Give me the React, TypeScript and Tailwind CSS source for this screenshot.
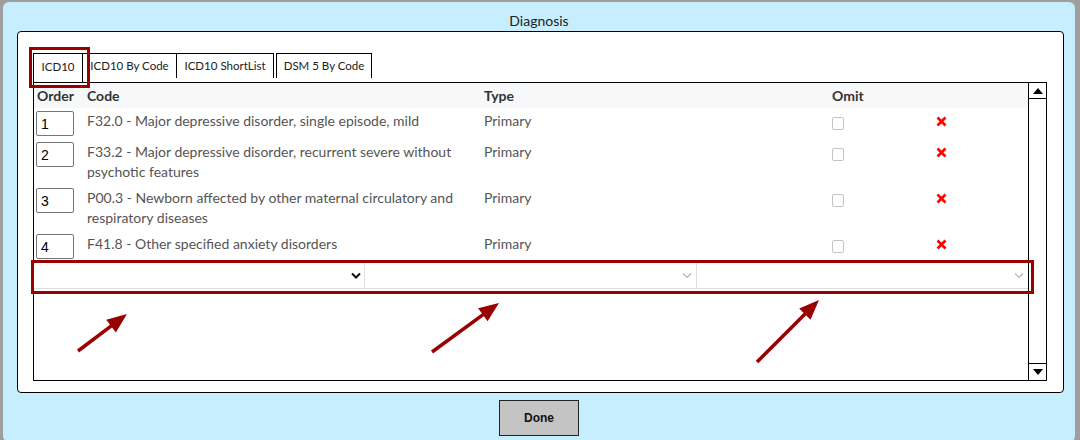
import React from 'react';

const rows = [
  { order: '1', code: 'F32.0 - Major depressive disorder, single episode, mild', type: 'Primary' },
  { order: '2', code: 'F33.2 - Major depressive disorder, recurrent severe without psychotic features', type: 'Primary' },
  { order: '3', code: 'P00.3 - Newborn affected by other maternal circulatory and respiratory diseases', type: 'Primary' },
  { order: '4', code: 'F41.8 - Other specified anxiety disorders', type: 'Primary' },
];

const tabs = ['ICD10', 'ICD10 By Code', 'ICD10 ShortList', 'DSM 5 By Code'];

function Arrow({ x1, y1, x2, y2 }: { x1: number; y1: number; x2: number; y2: number }) {
  const dx = x2 - x1;
  const dy = y2 - y1;
  const len = Math.sqrt(dx * dx + dy * dy);
  const ux = dx / len;
  const uy = dy / len;
  const headLen = 20;
  const half = 8;
  const bx = x2 - ux * headLen;
  const by = y2 - uy * headLen;
  const pts = `${x2},${y2} ${bx - uy * half},${by + ux * half} ${bx + uy * half},${by - ux * half}`;
  return (
    <g>
      <line x1={x1} y1={y1} x2={bx + ux * 2} y2={by + uy * 2} stroke="#990000" strokeWidth="3.5" />
      <polygon points={pts} fill="#990000" />
    </g>
  );
}

function Chevron({ dark }: { dark?: boolean }) {
  return (
    <svg width="10" height="7" viewBox="0 0 10 7">
      <path
        d="M1 1.5 L5 5.5 L9 1.5"
        fill="none"
        stroke={dark ? '#111' : '#b5b5b5'}
        strokeWidth={dark ? 2 : 1.2}
      />
    </svg>
  );
}

function RedX() {
  return (
    <svg width="11" height="11" viewBox="0 0 11 11">
      <path d="M1.5 1.5 L9.5 9.5 M9.5 1.5 L1.5 9.5" stroke="#ff0000" strokeWidth="2.6" />
    </svg>
  );
}

export default function App() {
  return (
    <div className="relative w-[1080px] h-[440px] overflow-hidden bg-[#9e9e9c] font-['Lato','Liberation_Sans',sans-serif]">
      <div className="ml-[3px] mt-[2px] w-[1072px] h-[440px] rounded-[6px] bg-[#c6eefe] flex flex-col">
        <div className="h-[29px] pt-[9px] text-center text-[14px] leading-[20px] text-[#222]">Diagnosis</div>

        <div className="ml-[14px] w-[1047px] h-[362px] border border-black rounded-[4px] bg-white pl-[15px] pt-[20px]">
          {/* tabs */}
          <div className="flex items-end h-[30px]">
            <div className="w-[50px] h-[29px] border-t border-l border-r border-black flex items-center justify-center text-[11.5px] text-[#222] pb-[2px]">
              {tabs[0]}
            </div>
            <div className="w-[94px] h-[25px] mb-[4px] border-t border-r border-black flex items-center justify-center text-[11.5px] text-[#222]">
              {tabs[1]}
            </div>
            <div className="w-[97px] h-[25px] mb-[4px] border-t border-r border-black flex items-center justify-center text-[11.5px] text-[#222]">
              {tabs[2]}
            </div>
            <div className="ml-[2px] w-[96px] h-[25px] mb-[4px] border-t border-l border-r border-black flex items-center justify-center text-[11.5px] text-[#222]">
              {tabs[3]}
            </div>
          </div>

          {/* table */}
          <div className="w-[1014px] h-[299px] border border-black flex">
            <div className="flex-1 flex flex-col">
              <div className="h-[25px] bg-[#f7f8fa] grid grid-cols-[50px_397px_348px_104px_1fr] items-center text-[14px] font-bold text-[#333]">
                <div className="pl-[3px]">Order</div>
                <div className="pl-[3px]">Code</div>
                <div className="pl-[3px]">Type</div>
                <div className="pl-[3px]">Omit</div>
                <div />
              </div>

              {rows.map((r) => (
                <div
                  key={r.order}
                  className="grid grid-cols-[50px_397px_348px_104px_1fr] pb-[3px] text-[14px] leading-[20px] text-[#555]"
                >
                  <div className="pt-[3px] pl-[2px]">
                    <div className="w-[38px] h-[25px] border border-[#767676] rounded-[2px] pl-[4px] pt-[2px] text-[14px] text-black font-['Liberation_Sans',sans-serif]">
                      {r.order}
                    </div>
                  </div>
                  <div className="pt-[3px] pl-[3px] pr-[18px]">{r.code}</div>
                  <div className="pt-[3px] pl-[3px]">{r.type}</div>
                  <div className="pt-[3px] pl-[3px] h-[23px] flex items-center">
                    <span className="w-[12px] h-[13px] border border-[#c4c4c4] rounded-[2px] mt-[4px]" />
                  </div>
                  <div className="pt-[3px] pl-[3px] h-[23px] flex items-center">
                    <RedX />
                  </div>
                </div>
              ))}

              <div className="flex h-[27px] border-b border-[#dedede]">
                <div className="flex-1 flex items-center justify-end pr-[3px]">
                  <Chevron dark />
                </div>
                <div className="flex-1 border-l border-[#dedede] flex items-center justify-end pr-[4px]">
                  <Chevron />
                </div>
                <div className="flex-1 border-l border-[#dedede] flex items-center justify-end pr-[4px]">
                  <Chevron />
                </div>
              </div>
            </div>

            {/* scrollbar */}
            <div className="w-[18px] border-l border-black flex flex-col justify-between">
              <div className="h-[16px] border-b border-black flex items-center justify-center">
                <svg width="10" height="6" viewBox="0 0 10 6">
                  <polygon points="5,0 10,6 0,6" fill="#000" />
                </svg>
              </div>
              <div className="h-[17px] border-t border-black flex items-center justify-center">
                <svg width="10" height="6" viewBox="0 0 10 6">
                  <polygon points="0,0 10,0 5,6" fill="#000" />
                </svg>
              </div>
            </div>
          </div>
        </div>

        <div className="flex justify-center mt-[7px]">
          <button className="w-[80px] h-[36px] bg-[#c4c4c4] border border-[#222] text-[12px] font-bold text-[#111] font-['Liberation_Sans',sans-serif]">
            Done
          </button>
        </div>
      </div>

      {/* annotations */}
      <div className="absolute left-[29px] top-[47px] w-[61px] h-[41px] border-[3px] border-[#990000]" />
      <div className="absolute left-[31px] top-[260px] w-[1003px] h-[34px] border-[3px] border-[#990000]" />
      <svg className="absolute left-0 top-0 pointer-events-none" width="1080" height="440">
        <Arrow x1={78} y1={351} x2={127} y2={314} />
        <Arrow x1={432} y1={352} x2={499} y2={303} />
        <Arrow x1={757} y1={362} x2={819} y2={300} />
      </svg>
    </div>
  );
}
